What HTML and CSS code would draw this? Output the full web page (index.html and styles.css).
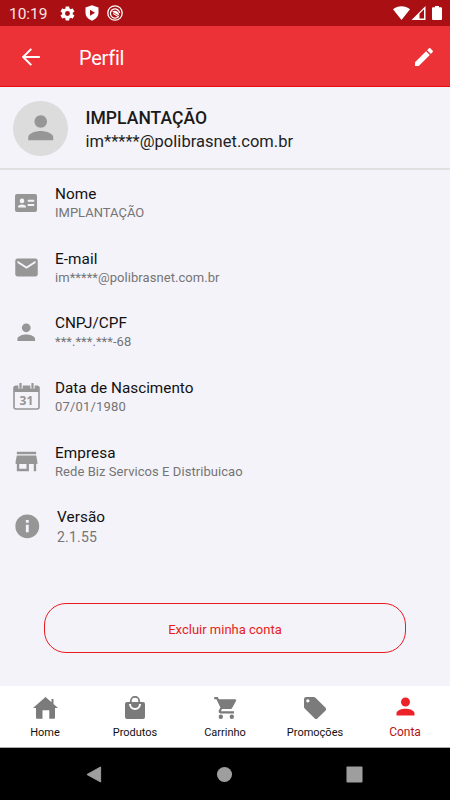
FILE: index.html
```html
<!DOCTYPE html>
<html lang="pt-BR">
<head>
<meta charset="utf-8">
<title>Perfil</title>
<link rel="stylesheet" href="styles.css">
</head>
<body>
<svg class="defs" aria-hidden="true">
  <symbol id="person" viewBox="0 0 24 24"><path d="M12 12c2.2 0 4-1.8 4-4s-1.800-4-4-4-4 1.800-4 4 1.800 4 4 4zm0 2c-2.700 0-8 1.300-8 4v2h16v-2c0-2.700-5.300-4-8-4z"/></symbol>
</svg>
<div class="status">
  <span class="clock">10:19</span>
  <svg class="s-gear" viewBox="0 0 24 24"><path d="M19.400 13c.1-.7.1-1.300 0-2l2.100-1.600c.2-.2.200-.4.100-.6l-2-3.500c-.1-.2-.4-.3-.6-.2l-2.500 1c-.5-.4-1.100-.7-1.700-1L14.400 2.400c0-.2-.2-.4-.5-.4h-4c-.3 0-.4.2-.5.400L9.100 5.100c-.6.300-1.200.6-1.700 1l-2.500-1c-.2-.1-.5 0-.6.200l-2 3.500c-.1.200-.1.500.1.600L4.500 11c-.1.700-.1 1.300 0 2l-2.100 1.600c-.2.200-.2.400-.1.600l2 3.500c.1.200.4.300.6.200l2.500-1c.5.400 1.100.7 1.700 1l.3 2.700c.1.200.2.400.5.400h4c.3 0 .5-.2.500-.4l.4-2.700c.6-.3 1.200-.6 1.700-1l2.500 1c.2.100.5 0 .6-.2l2-3.500c.1-.2.100-.5-.1-.6zM12 15.500a3.500 3.500 0 1 1 0-7 3.500 3.500 0 0 1 0 7z"/></svg>
  <svg class="s-shield" viewBox="0 0 14 16"><path fill-rule="evenodd" d="M7 .2l6.500 2.400v5c0 3.800-2.700 6.800-6.500 8.200C3.200 14.400.5 11.400.5 7.600v-5zM5 4.800v6L10 7.800z"/></svg>
  <svg class="s-disc" viewBox="0 0 16 16"><circle cx="8" cy="8" r="7.200" fill="none" stroke="#fff" stroke-width="1.300"/><path d="M11.400 11.600A4.600 4.600 0 1 1 12.600 8" fill="none" stroke="#fff" stroke-width="1.300"/><path d="M5.200 6.800C7.500 4.800 11.600 5.600 12.400 10.800z"/><path d="M6.200 8.500l5.600 3.400" stroke="#fff" stroke-width="1.100"/></svg>
  <span class="grow"></span>
  <svg class="s-wifi" viewBox="0 0 17 14"><path d="M0 3.200C4.700-.8 12.300-.8 17 3.200L8.500 14z"/></svg>
  <svg class="s-signal" viewBox="0 0 15 14"><path fill-rule="evenodd" d="M.5 14L14.500 0v14zM8.500 7.800v4.700H13V3.300z"/></svg>
  <svg class="s-battery" viewBox="0 0 10 14"><path d="M3 0h4v1.300h2a1 1 0 0 1 1 1V13a1 1 0 0 1-1 1H1a1 1 0 0 1-1-1V2.300a1 1 0 0 1 1-1h2z"/></svg>
</div>
<header class="appbar">
  <svg class="back" viewBox="0 0 18 18"><path d="M17.800 9H1.500M9.300.9L1.200 9l8.100 8.100" fill="none" stroke="#fff" stroke-width="2"/></svg>
  <h1>Perfil</h1>
  <svg class="edit" viewBox="3 3 18 18"><path d="M3 17.250V21h3.750L17.810 9.940l-3.750-3.750zM20.700 7.040c.4-.4.4-1 0-1.400l-2.340-2.340a1 1 0 0 0-1.410 0l-1.830 1.830 3.750 3.750z"/></svg>
</header>
<main>
  <section class="profile">
    <div class="avatar"><svg><use href="#person"/></svg></div>
    <div><div class="p-name">IMPLANTAÇÃO</div><div class="p-mail">im*****@polibrasnet.com.br</div></div>
  </section>
  <section class="rows">
    <div class="row"><div class="ico"><svg class="i-card" viewBox="0 0 22 18"><path fill-rule="evenodd" d="M2 0h18a2 2 0 0 1 2 2v14a2 2 0 0 1-2 2H2a2 2 0 0 1-2-2V2a2 2 0 0 1 2-2z"/><g fill="#f4f3f9"><circle cx="7" cy="6.900" r="2.300"/><path d="M3 13.500v-.8c0-1.400 2.500-2.100 4-2.100s4 .7 4 2.100v.8zM12.700 5.800h6.500v2h-6.500zM12.700 10.100h6.500v2h-6.500z"/></g></svg></div><div><div class="t">Nome</div><div class="v">IMPLANTAÇÃO</div></div></div>
    <div class="row"><div class="ico"><svg class="i-mail" viewBox="0 0 24 24"><path d="M20 4H4c-1.100 0-2 .9-2 2v12c0 1.100.9 2 2 2h16c1.100 0 2-.9 2-2V6c0-1.100-.9-2-2-2zm0 4l-8 5-8-5V6l8 5 8-5z"/></svg></div><div><div class="t">E-mail</div><div class="v wide">im*****@polibrasnet.com.br</div></div></div>
    <div class="row"><div class="ico"><svg class="i-person"><use href="#person"/></svg></div><div><div class="t tight">CNPJ/CPF</div><div class="v wide">***.***.***-68</div></div></div>
    <div class="row"><div class="ico"><svg class="i-cal" viewBox="0 0 27 27"><rect x="1" y="3.200" width="25" height="22.800" rx="2" fill="none" stroke="#969696" stroke-width="1.600"/><path d="M1 9V4.500a1.500 1.500 0 0 1 1.500-1.500h22A1.500 1.500 0 0 1 26 4.500V9z"/><path d="M7.500 0v5.500M19.500 0v5.500" stroke="#f4f3f9" stroke-width="4.400"/><path d="M7.500.5v4.200M19.500.5v4.200" stroke="#969696" stroke-width="2.200" stroke-linecap="round"/><text x="13.400" y="21.500" text-anchor="middle">31</text></svg></div><div><div class="t tight">Data de Nascimento</div><div class="v wide date">07/01/1980</div></div></div>
    <div class="row"><div class="ico"><svg class="i-store" viewBox="0 0 24 24"><path d="M20 4H4v2h16zm1 10v-2l-1-5H4l-1 5v2h1v6h10v-6h4v6h2v-6zm-9 4H6v-4h6z"/></svg></div><div><div class="t">Empresa</div><div class="v wide">Rede Biz Servicos E Distribuicao</div></div></div>
    <div class="row version"><div class="ico"><svg class="i-info" viewBox="0 0 24 24"><path fill-rule="evenodd" d="M12 2a10 10 0 1 0 0 20 10 10 0 0 0 0-20zm1.200 15h-2.400v-6.300h2.400zm0-8h-2.400V6.700h2.400z"/></svg></div><div><div class="t">Versão</div><div class="v">2.1.55</div></div></div>
  </section>
  <button class="delete">Excluir minha conta</button>
</main>
<nav class="tabs">
  <a><svg viewBox="0 0 25 22"><path d="M12.500 0l6 5.300V2.100h2v5L25 11h-3v9.800a1 1 0 0 1-1 1h-4.700v-8.500H9.500v8.500H4a1 1 0 0 1-1-1V11H0z"/></svg><span>Home</span></a>
  <a><svg class="bag" viewBox="0 0 20 23"><path d="M2 6h16a2 2 0 0 1 2 2v13a2 2 0 0 1-2 2H2a2 2 0 0 1-2-2V8a2 2 0 0 1 2-2z"/><path d="M5.800 6.500V5a4.200 4.200 0 0 1 8.400 0v1.500" fill="none" stroke="#7b7b7b" stroke-width="1.800"/><path d="M5 8a5 5 0 0 0 10 0" fill="none" stroke="#fff" stroke-width="2"/></svg><span>Produtos</span></a>
  <a><svg class="cart" viewBox="1 2 20.500 20"><path d="M7 18a2 2 0 1 0 0 4 2 2 0 0 0 0-4zM1 2v2h2l3.600 7.590-1.350 2.450C4.520 15.370 5.480 17 7 17h12v-2H7.420l-.25-.25.930-1.750h7.450c.75 0 1.410-.41 1.750-1.030l3.580-6.490A1 1 0 0 0 20 4H5.210l-.94-2zm16 16a2 2 0 1 0 0 4 2 2 0 0 0 0-4z"/></svg><span>Carrinho</span></a>
  <a><svg class="tag" viewBox="2 2 20 20"><path d="M21.410 11.580l-9-9A2 2 0 0 0 11 2H4a2 2 0 0 0-2 2v7c0 .55.220 1.050.59 1.420l9 9a2 2 0 0 0 2.820 0l7-7a2 2 0 0 0 0-2.840zM5.500 7a1.500 1.500 0 1 1 0-3 1.500 1.500 0 0 1 0 3z"/></svg><span>Promoções</span></a>
  <a class="on"><svg><use href="#person"/></svg><span>Conta</span></a>
</nav>
<div class="sys">
  <svg viewBox="0 0 18 18"><path d="M1 9L15.500 1v16z" stroke="#9e9e9e" stroke-linejoin="round"/></svg>
  <svg viewBox="0 0 18 18"><circle cx="9" cy="9" r="8"/></svg>
  <svg viewBox="0 0 18 18"><rect x=".5" y=".5" width="17" height="17" rx="1"/></svg>
</div>
</body>
</html>
```
FILE: styles.css
```css
* { box-sizing: border-box; }
body { margin: 0; width: 450px; height: 800px; display: flex; flex-direction: column; overflow: hidden; background: #f4f3f9; font-family: Roboto, "Liberation Sans", sans-serif; color: #111; }
svg { display: block; flex: none; }
.defs { display: none; }
.status { height: 26px; flex: none; background: #a90f13; display: flex; align-items: center; padding: 0 8px 0 9px; }
.status svg, .appbar svg { fill: #fff; }
.clock { color: #f8e4e4; font-size: 15.500px; width: 50px; letter-spacing: -.05px; padding-top: 1px; }
.s-gear { width: 17px; height: 17px; }
.s-shield { width: 14px; height: 16px; margin-left: 8.500px; }
.s-disc { width: 16px; height: 16px; margin-left: 8.500px; }
.grow { flex: 1; }
.s-wifi { width: 17px; height: 14px; }
.s-signal { width: 15px; height: 14px; margin-left: 1px; }
.s-battery { width: 10px; height: 14px; margin-left: 6px; }
.appbar { height: 61px; flex: none; background: #ed3237; border-bottom: 1px solid #e80c10; display: flex; align-items: center; padding: 0 17px 0 22px; color: #fff; }
.back { width: 18px; height: 18px; margin-top: 1px; }
.appbar h1 { flex: 1; margin: 0 0 0 39px; font-size: 20px; font-weight: 400; padding-top: 3px; letter-spacing: -.25px; }
.edit { width: 18px; height: 18px; margin-top: 1px; }
main { height: 599px; flex: none; }
.profile { height: 83px; border-bottom: 2px solid #e0e0e0; display: flex; padding: 13.500px 13px 0; }
.avatar { width: 55px; height: 55px; border-radius: 50%; background: #dcdcdc; display: flex; align-items: center; justify-content: center; margin-right: 17.500px; }
.avatar svg { width: 37.500px; height: 37.500px; fill: #969696; }
.p-name { font-size: 17.500px; font-weight: 500; line-height: 23px; margin-top: 6px; color: #1a1a1a; letter-spacing: .05px; }
.p-mail { font-size: 16.500px; line-height: 23px; color: #222; letter-spacing: .03px; }
.row { height: 64.700px; display: flex; padding-top: 14px; }
.ico { width: 52px; height: 37px; margin-right: 3px; display: flex; align-items: center; justify-content: center; fill: #969696; }
.i-card { width: 22px; height: 18px; }
.i-mail { width: 27px; height: 27px; }
.i-person { width: 26.500px; height: 26.500px; }
.i-cal { width: 27px; height: 27px; }
.i-cal text { font: 700 12px "Open Sans", sans-serif; }
.i-store { width: 29px; height: 29px; }
.i-info { width: 28.600px; height: 28.600px; margin: 1px 0 0 3px; }
.t { font-size: 15.300px; line-height: 20px; letter-spacing: .07px; }
.t.tight { letter-spacing: 0; }
.v { font-size: 13px; line-height: 18px; color: #757575; }
.v.wide { letter-spacing: .06px; }
.v.date { letter-spacing: .17px; }
.version .t { padding-left: 2px; }
.version .v { padding: 1px 0 0 2px; font-size: 14px; letter-spacing: .2px; }
.delete { display: block; width: 362px; height: 50px; margin: 45px 0 0 44px; border: 1px solid #e91b20; border-radius: 22px; background: none; color: #e91b20; font: 13px Roboto, sans-serif; padding: 2px 0 0; }
.tabs { height: 62px; flex: none; background: #fff; display: grid; grid-template-columns: repeat(5, 1fr); border-bottom: 1px solid #aaa; }
.tabs a { display: flex; flex-direction: column; align-items: center; padding-top: 11px; font-size: 11px; fill: #7b7b7b; }
.tabs svg { width: 25px; height: 22px; }
.tabs .bag { width: 20px; height: 23px; margin-top: -1px; }
.tabs .cart { width: 23px; height: 22px; }
.tabs .tag { width: 22px; height: 22px; }
.tabs span { line-height: 14px; margin-top: 7px; }
.tabs .on { color: #b31217; fill: #ed2228; padding-top: 7px; font-size: 12px; }
.tabs .on svg { width: 27px; height: 27px; }
.tabs .on span { margin-top: 5px; }
.sys { flex: 1; background: #000; display: flex; justify-content: space-between; align-items: center; padding: 0 87px 0 86px; fill: #9e9e9e; }
.sys svg { width: 17px; height: 17px; }
```
